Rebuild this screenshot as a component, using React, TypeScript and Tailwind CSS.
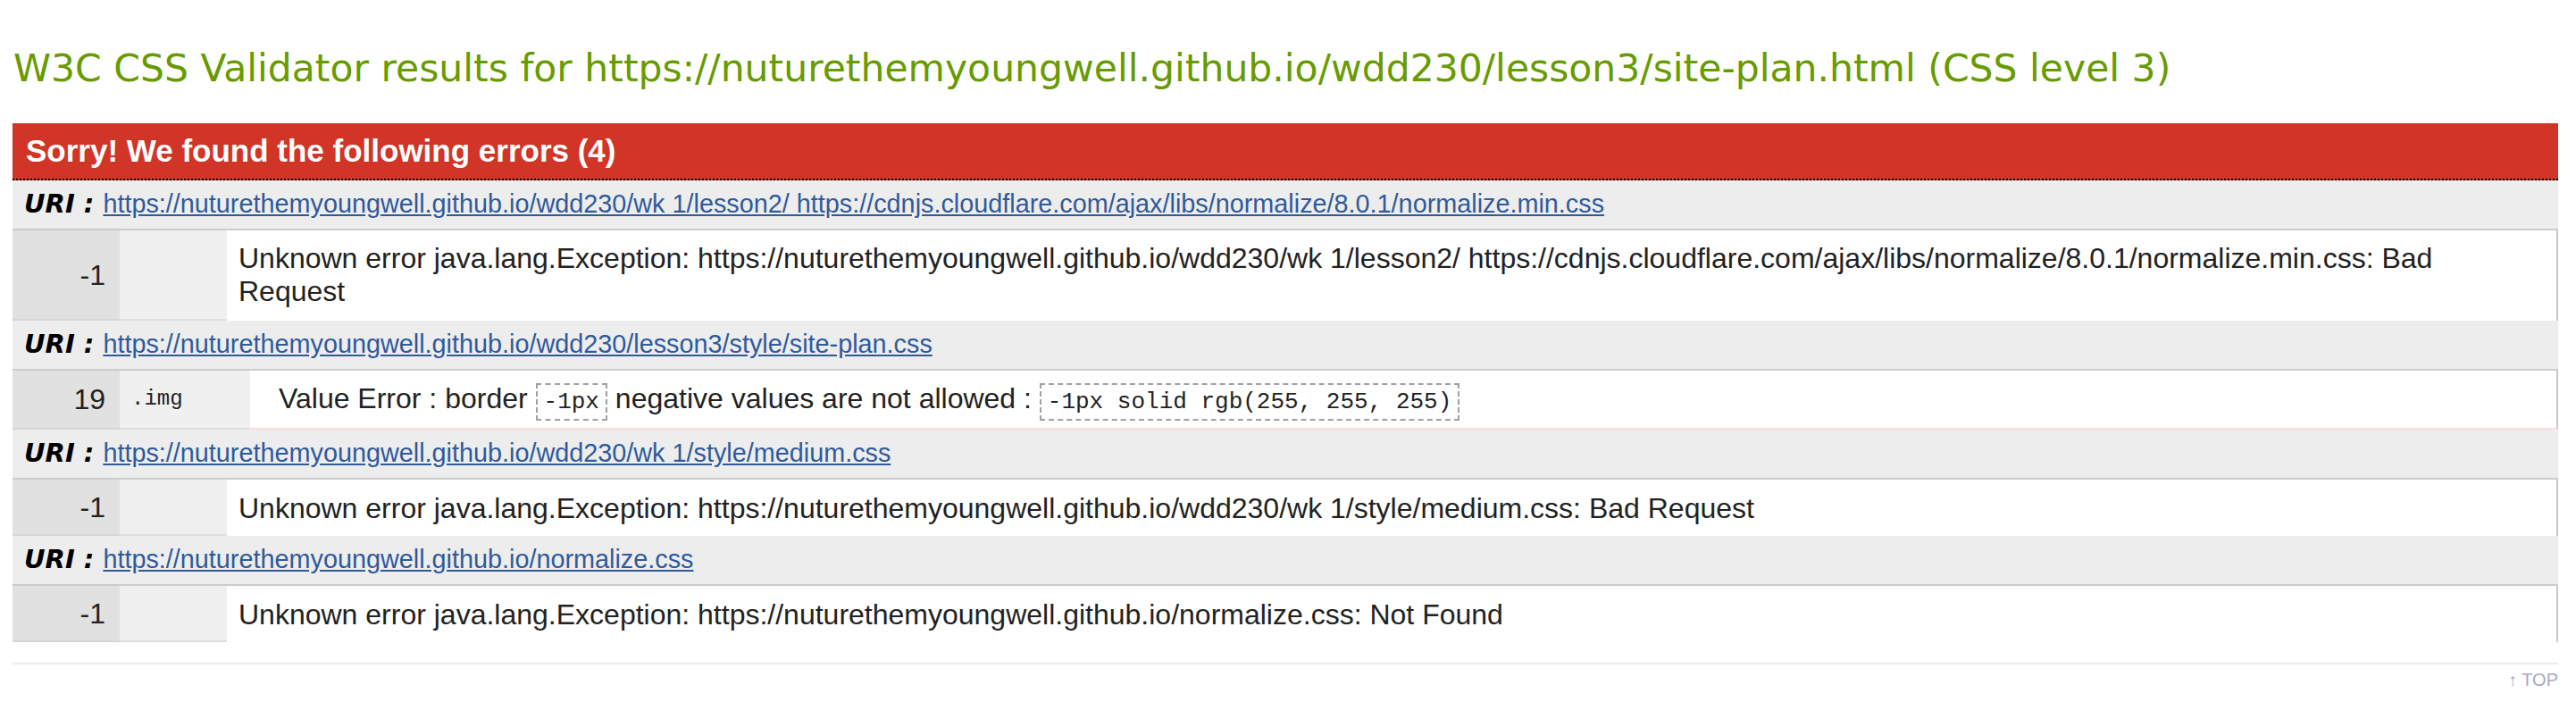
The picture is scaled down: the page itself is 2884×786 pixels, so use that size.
const sans = "font-['Liberation_Sans',Arial,sans-serif]";
const verdana = "font-['DejaVu_Sans',Verdana,sans-serif]";
const mono = "font-['Liberation_Mono','Courier_New',monospace]";

type Group = {
  uri: string;
  line: string;
  context: string;
  ctxWidth: string;
  msg: React.ReactNode;
  msgPad: string;
  msgBorder: string;
};

function Code({ children }: { children: React.ReactNode }) {
  return (
    <span className={`${mono} text-[26px] leading-[20px] border-2 border-dashed border-[#a0a0a0] bg-white px-[7px] py-[4px]`}>
      {children}
    </span>
  );
}

const groups: Group[] = [
  {
    uri: 'https://nuturethemyoungwell.github.io/wdd230/wk 1/lesson2/ https://cdnjs.cloudflare.com/ajax/libs/normalize/8.0.1/normalize.min.css',
    line: '-1',
    context: '',
    ctxWidth: 'w-[120px]',
    msg: 'Unknown error java.lang.Exception: https://nuturethemyoungwell.github.io/wdd230/wk 1/lesson2/ https://cdnjs.cloudflare.com/ajax/libs/normalize/8.0.1/normalize.min.css: Bad Request',
    msgPad: 'pl-[13px] pt-[13px] pb-[14px]',
    msgBorder: '',
  },
  {
    uri: 'https://nuturethemyoungwell.github.io/wdd230/lesson3/style/site-plan.css',
    line: '19',
    context: '.img',
    ctxWidth: 'w-[146px]',
    msg: (
      <>
        Value Error : border <Code>-1px</Code> negative values are not allowed : <Code>-1px solid rgb(255, 255, 255)</Code>
      </>
    ),
    msgPad: 'pl-[32px] pt-[13px] pb-[14px]',
    msgBorder: 'border-b-2 border-b-[#fbdede]',
  },
  {
    uri: 'https://nuturethemyoungwell.github.io/wdd230/wk 1/style/medium.css',
    line: '-1',
    context: '',
    ctxWidth: 'w-[120px]',
    msg: 'Unknown error java.lang.Exception: https://nuturethemyoungwell.github.io/wdd230/wk 1/style/medium.css: Bad Request',
    msgPad: 'pl-[13px] pt-[14px] pb-[12px]',
    msgBorder: '',
  },
  {
    uri: 'https://nuturethemyoungwell.github.io/normalize.css',
    line: '-1',
    context: '',
    ctxWidth: 'w-[120px]',
    msg: 'Unknown error java.lang.Exception: https://nuturethemyoungwell.github.io/normalize.css: Not Found',
    msgPad: 'pl-[13px] pt-[14px] pb-[12px]',
    msgBorder: '',
  },
];

export default function App() {
  return (
    <div className="w-[2884px] h-[786px] bg-white overflow-hidden">
      {/* heading */}
      <h1 className={`${verdana} ml-[15px] mt-[52px] text-[42.5px] leading-[50px] text-[#679b00] whitespace-nowrap`}>
        W3C CSS Validator results for https://nuturethemyoungwell.github.io/wdd230/lesson3/site-plan.html (CSS level 3)
      </h1>

      <div className="ml-[14px] w-[2850px] mt-[36px]">
        {/* red error bar */}
        <div className={`${sans} h-[64px] bg-[#d03527] border-b-2 border-dotted border-black flex items-center pl-[15px] text-white text-[35px] leading-[40px] font-bold`}>
          Sorry! We found the following errors (4)
        </div>

        {groups.map((g, i) => (
          <div key={i} className="flex flex-col">
            {/* uri row */}
            <div className="h-[56px] bg-[#ededed] border-b-2 border-[#cccccc] flex items-center pl-[13px] whitespace-nowrap">
              <span className={`${verdana} font-bold italic text-[29px] text-black`}>URI :</span>
              <a className={`${sans} ml-[10px] text-[28.8px] text-[#2f5a9c] underline`}>{g.uri}</a>
            </div>
            {/* error row */}
            <div className="flex">
              <div className={`${sans} w-[120px] shrink-0 bg-[#e1e1e1] border-b-2 border-[#d6d6d6] flex items-center justify-end pr-[16px] text-[32px] text-[#222]`}>
                {g.line}
              </div>
              <div className={`${g.ctxWidth} shrink-0 bg-[#f0f0f0] border-b-2 border-[#dedede] flex items-center pl-[13px] ${mono} text-[24px] text-[#222]`}>
                {g.context}
              </div>
              <div className={`flex-1 bg-white border-r-2 border-r-[#c8c8c8] ${g.msgBorder} ${g.msgPad} pr-[16px] ${sans} text-[32px] leading-[37px] text-[#222]`}>
                {g.msg}
              </div>
            </div>
          </div>
        ))}

        {/* footer */}
        <div className="mt-[23px] border-t-2 border-[#e9e9f7]" />
        <div className={`${sans} flex justify-end pt-[2px] text-[20px] text-[#a8a8c8]`}>
          <span>↑ TOP</span>
        </div>
      </div>
    </div>
  );
}
